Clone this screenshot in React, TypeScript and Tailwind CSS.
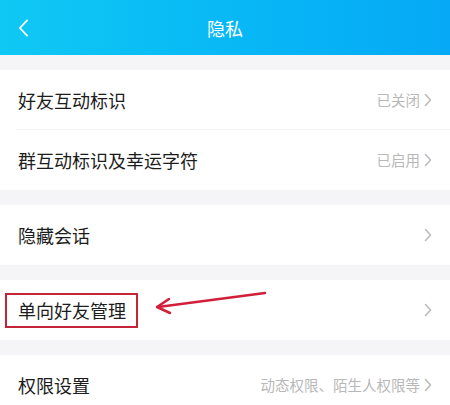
import React from 'react';

const font = { fontFamily: '"Noto Sans CJK SC", "Noto Sans", sans-serif' };

function Chevron({ className }: { className?: string }) {
  return (
    <svg viewBox="0 0 8 14" className={className} fill="none" stroke="currentColor" strokeWidth="1.6">
      <path d="M1.5 1.5 L6.5 7 L1.5 12.5" strokeLinecap="round" strokeLinejoin="round" />
    </svg>
  );
}

function Row({ label, value, divider }: { label: string; value?: string; divider?: boolean }) {
  return (
    <div className="relative h-[60px] bg-white flex items-center pl-[18px] pr-[18px]">
      <span className="text-[18px] text-[#1c1c1c] leading-none">{label}</span>
      <div className="ml-auto flex items-center gap-[4px] text-[#b8b8b8]">
        {value && <span className="text-[14.5px] leading-none">{value}</span>}
        <Chevron className="w-[8px] h-[14px] text-[#bcbcbc]" />
      </div>
      {divider && <div className="absolute left-[16px] right-0 bottom-0 h-px bg-[#f2f2f5]" />}
    </div>
  );
}

export default function App() {
  return (
    <div className="relative w-[450px] h-[405px] overflow-hidden bg-[#f5f5f8]" style={font}>
      {/* header */}
      <div className="h-[55px] flex items-center bg-gradient-to-r from-[#10c8f4] to-[#06a9f6] relative">
        <svg viewBox="0 0 12 20" className="absolute left-[18px] top-[19px] w-[11px] h-[18px]" fill="none" stroke="white" strokeWidth="2">
          <path d="M10 1.5 L2 10 L10 18.5" strokeLinecap="round" strokeLinejoin="round" />
        </svg>
        <span className="mx-auto text-white text-[18px] leading-none">隐私</span>
      </div>

      <div className="mt-[15px]">
        <Row label="好友互动标识" value="已关闭" divider />
        <Row label="群互动标识及幸运字符" value="已启用" />
      </div>
      <div className="mt-[15px]">
        <Row label="隐藏会话" />
      </div>
      <div className="mt-[15px]">
        <Row label="单向好友管理" />
      </div>
      <div className="mt-[15px]">
        <Row label="权限设置" value="动态权限、陌生人权限等" />
      </div>

      {/* annotation */}
      <div className="absolute left-[5px] top-[293px] w-[133px] h-[35px] border-2 border-[#c42438]" />
      <svg className="absolute left-0 top-0 w-[450px] h-[405px] pointer-events-none" viewBox="0 0 450 405">
        <path d="M265 293 L158 307" stroke="#d21f3a" strokeWidth="2.5" strokeLinecap="round" />
        <path d="M169 299 L157 307 L170 313" stroke="#d21f3a" strokeWidth="2.5" fill="none" strokeLinecap="round" strokeLinejoin="round" />
      </svg>
    </div>
  );
}
